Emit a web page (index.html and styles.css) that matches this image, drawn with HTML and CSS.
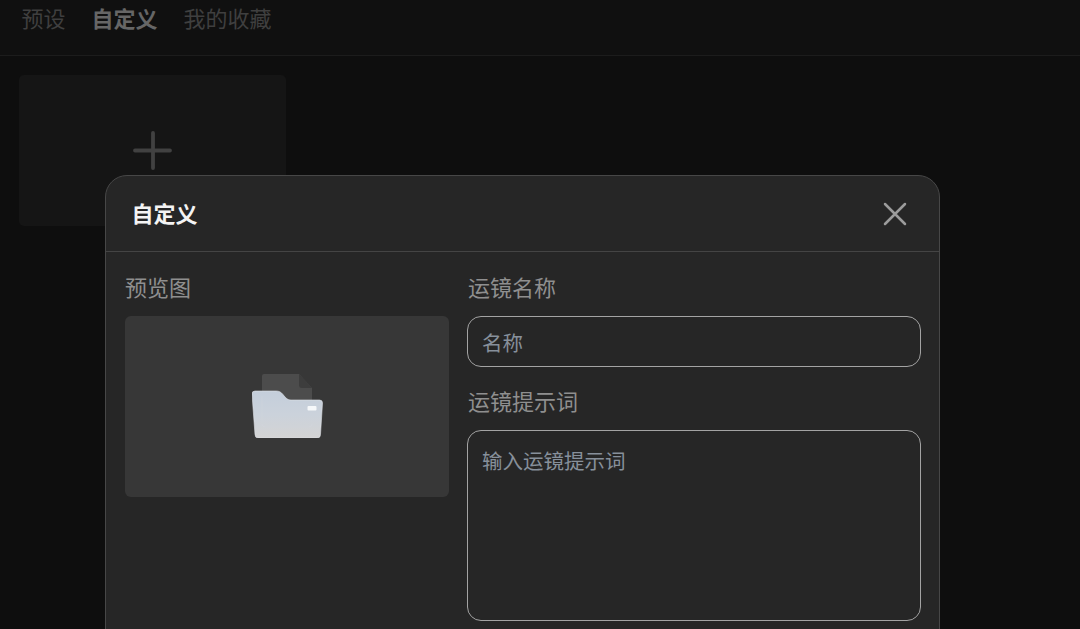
FILE: index.html
```html
<!DOCTYPE html>
<html lang="zh-CN">
<head>
<meta charset="utf-8">
<title>自定义</title>
<link rel="stylesheet" href="styles.css">
</head>
<body>
<nav class="tabs">
  <span class="tab">预设</span>
  <span class="tab tab-active">自定义</span>
  <span class="tab">我的收藏</span>
</nav>
<main class="content">
  <div class="add-card">
    <svg class="add-icon" width="40" height="40" viewBox="0 0 40 40" aria-hidden="true">
      <path d="M20 2V37M2 19.500H37" fill="none" stroke="#414141" stroke-width="3.800" stroke-linecap="round"/>
    </svg>
  </div>
</main>
<section class="modal">
  <header class="modal-head">
    <h2 class="modal-title">自定义</h2>
    <svg class="close" width="26" height="26" viewBox="0 0 26 26" aria-hidden="true">
      <path d="M3 3L23 23M23 3L3 23" fill="none" stroke="#9c9c9c" stroke-width="2.500" stroke-linecap="round"/>
    </svg>
  </header>
  <div class="modal-body">
    <div class="col-left">
      <div class="label">预览图</div>
      <div class="preview">
        <svg class="folder" width="71" height="64" viewBox="0 0 71 64" aria-hidden="true">
          <defs>
            <linearGradient id="front" x1="0" y1="0" x2="0" y2="1">
              <stop offset="0" stop-color="#c4cedb"/>
              <stop offset="0.5" stop-color="#cbd2db"/>
              <stop offset="1" stop-color="#d4d4d4"/>
            </linearGradient>
          </defs>
          <path d="M12 0H47L60 14V50a3 3 0 0 1-3 3H12a2 2 0 0 1-2-2V2a2 2 0 0 1 2-2Z" fill="#4c4c4c"/>
          <path d="M47 0L60 14H50a3 3 0 0 1-3-3Z" fill="#3d3d3d"/>
          <path d="M3 17H24C27 17 29 18 31 20.500C34 24.500 36 26 39 26H67.500A3 3 0 0 1 70.500 29L68.500 60.500A3.500 3.500 0 0 1 65 64H6.500A3.500 3.500 0 0 1 3 60.500L0 20A3 3 0 0 1 3 17Z" fill="url(#front)" stroke="#dfe3e8" stroke-width="0.600"/>
          <path d="M10 22V50a3 3 0 0 0 3 3H57a3 3 0 0 0 3-3" fill="none" stroke="#d4d8de" stroke-width="0.800" opacity="0.500"/>
          <rect x="55.500" y="32" width="9" height="4.500" rx="1" fill="#f6f8fa"/>
        </svg>
      </div>
    </div>
    <div class="col-right">
      <label class="label label-field" for="name">运镜名称</label>
      <input class="field field-name" id="name" type="text" placeholder="名称">
      <label class="label label-field label-second" for="prompt">运镜提示词</label>
      <textarea class="field field-prompt" id="prompt" placeholder="输入运镜提示词"></textarea>
    </div>
  </div>
</section>
</body>
</html>
```

FILE: styles.css
```css
* { box-sizing: border-box; }

html, body {
  margin: 0;
  height: 100%;
  overflow: hidden;
}

body {
  position: relative;
  background: #0e0e0e;
  font-family: "Noto Sans CJK SC", "Noto Sans", sans-serif;
  font-size: 22px;
}

.tabs {
  display: flex;
  gap: 26px;
  height: 56px;
  padding: 1px 0 0 21.500px;
  border-bottom: 1px solid #1c1c1c;
  line-height: 32px;
  background: #101010;
}

.tab { color: #3f3f3f; }
.tab-active { color: #666; font-weight: 700; }

.content { padding: 19px 19px; }

.add-card {
  display: flex;
  align-items: center;
  justify-content: center;
  width: 267px;
  height: 151px;
  border-radius: 5px;
  background: #151515;
}

.modal {
  position: absolute;
  left: 105px;
  top: 175px;
  width: 835px;
  height: 520px;
  border: 1px solid #474747;
  border-radius: 22px;
  background: #262626;
}

.modal-head {
  display: flex;
  align-items: center;
  justify-content: space-between;
  height: 76px;
  padding: 0 31px 4px 25.500px;
  border-bottom: 1px solid #444;
}

.modal-title {
  margin: 0;
  color: #f4f4f4;
  font-size: 22px;
  font-weight: 700;
  line-height: 32px;
}

.close { position: relative; top: 2px; }

.modal-body {
  display: flex;
  gap: 18px;
  padding: 18px 18.500px 0 19px;
}

.col-left { width: 324px; flex: none; }
.col-right { flex: 1; display: flex; flex-direction: column; }

.label {
  display: block;
  height: 32px;
  margin-bottom: 14px;
  color: #8f8f8f;
  line-height: 32px;
}

.label-field { padding-left: 1px; }
.label-second { margin-top: 17px; }

.preview {
  display: flex;
  align-items: center;
  justify-content: center;
  height: 181px;
  border-radius: 6px;
  background: #373737;
}

.folder { position: relative; top: -1px; }

.field {
  display: block;
  width: 100%;
  padding: 0 14px;
  border: 1px solid #a3a3a3;
  border-radius: 14px;
  outline: none;
  background: #262626;
  color: #e0e0e0;
  font-family: inherit;
  font-size: 20.500px;
}

.field::placeholder { color: #87909b; opacity: 1; }

.field-name { height: 51px; line-height: 30px; }

.field-prompt {
  height: 191px;
  padding-top: 13px;
  line-height: 32px;
  resize: none;
}
```
